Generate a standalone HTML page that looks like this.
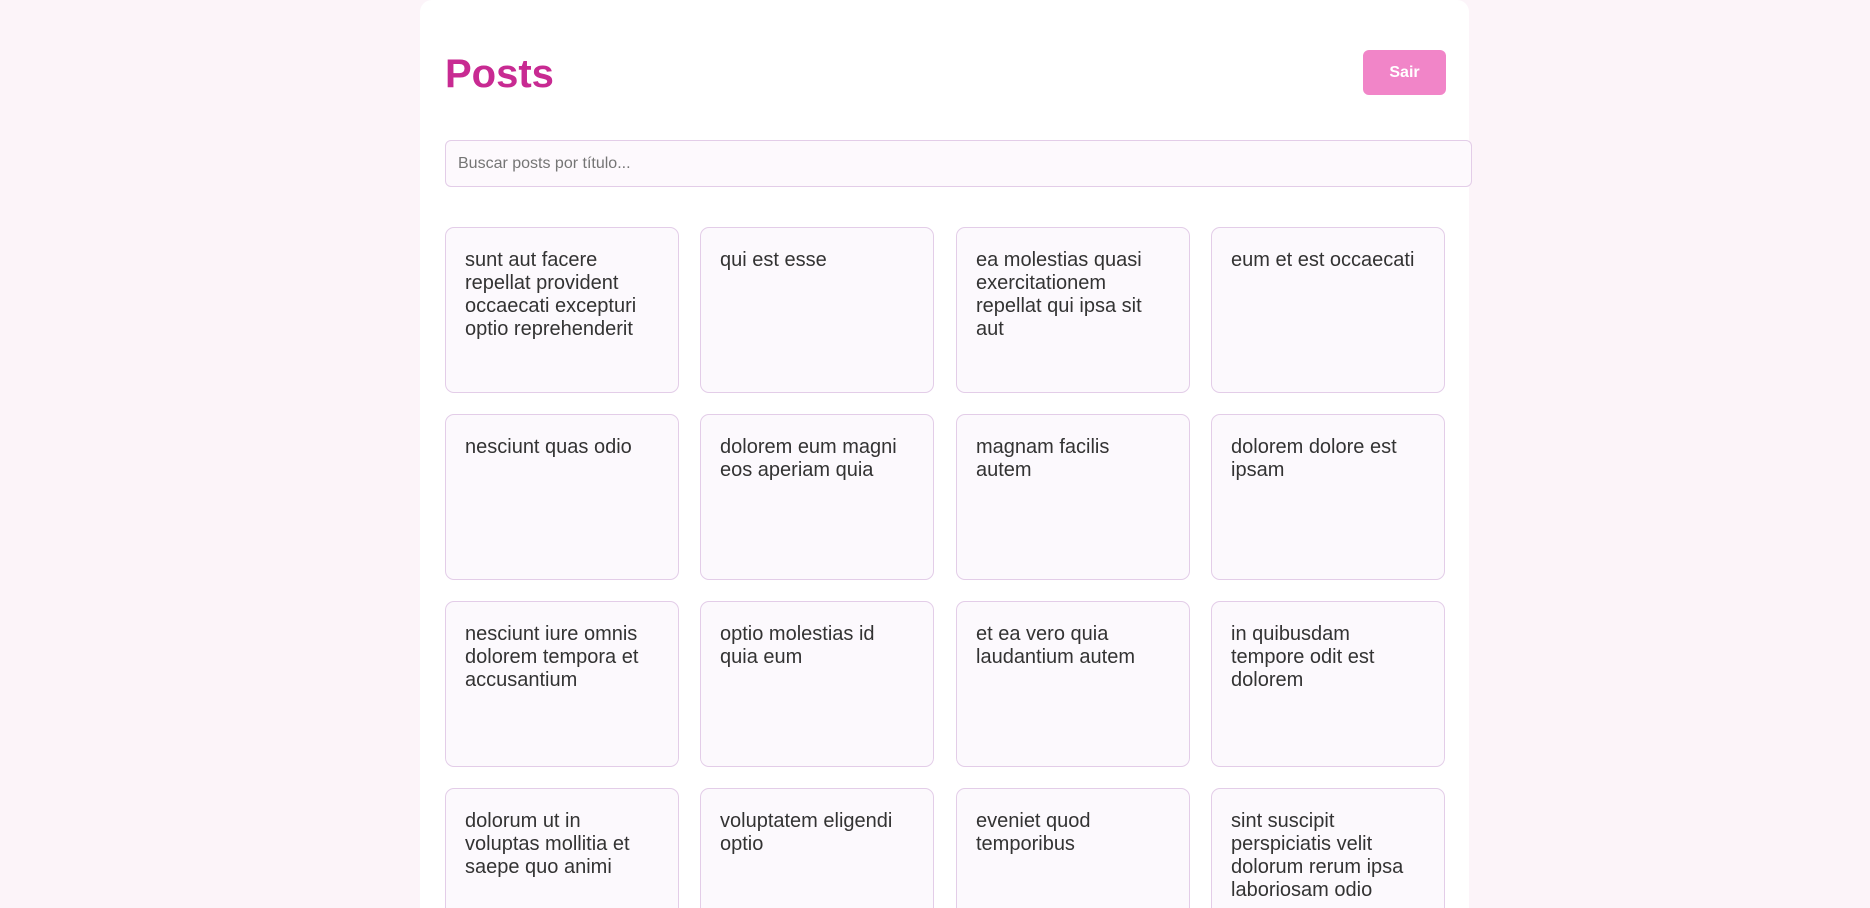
<!DOCTYPE html>
<html><head><meta charset="utf-8"><style>
html,body{margin:0;padding:0;background:#fcf4f9;font-family:"Liberation Sans",Arial,sans-serif;overflow:hidden;height:908px;width:1870px;}
.wrap{position:absolute;left:420px;top:0;width:1049px;height:908px;background:#fff;border-radius:12px 12px 0 0;}
.clip{position:absolute;left:0;top:0;width:1049px;height:908px;overflow:hidden;}
h1{position:absolute;left:25px;top:51px;margin:0;font-size:40px;line-height:46px;font-weight:bold;color:#c82a92;}
.btn{position:absolute;left:943px;top:50px;width:83px;height:45px;background:#f185c8;border-radius:6px;color:#fff;font-weight:bold;font-size:16px;line-height:45px;text-align:center;}
.search{position:absolute;left:25px;top:140px;width:1025px;height:45px;border:1px solid #e3cde8;border-radius:6px;background:#fdf9fd;box-sizing:content-box;}
.search span{position:absolute;left:12px;top:13px;font-size:16px;line-height:19px;color:#757575;}
.card{position:absolute;width:232px;height:164px;border:1px solid #e3cde8;border-radius:9px;background:#fcf9fd;box-sizing:content-box;}
.card div{position:absolute;left:19px;top:21px;width:193px;font-size:20px;line-height:23px;color:#333;}
</style></head><body>
<div class="wrap">
<h1>Posts</h1>
<div class="btn">Sair</div>
<div class="search"><span>Buscar posts por título...</span></div>
<div class="clip">
<div class="card" style="left:25px;top:227px"><div>sunt aut facere repellat provident occaecati excepturi optio reprehenderit</div></div>
<div class="card" style="left:280px;top:227px"><div>qui est esse</div></div>
<div class="card" style="left:536px;top:227px"><div>ea molestias quasi exercitationem repellat qui ipsa sit aut</div></div>
<div class="card" style="left:791px;top:227px"><div>eum et est occaecati</div></div>
<div class="card" style="left:25px;top:414px"><div>nesciunt quas odio</div></div>
<div class="card" style="left:280px;top:414px"><div>dolorem eum magni eos aperiam quia</div></div>
<div class="card" style="left:536px;top:414px"><div>magnam facilis autem</div></div>
<div class="card" style="left:791px;top:414px"><div>dolorem dolore est ipsam</div></div>
<div class="card" style="left:25px;top:601px"><div>nesciunt iure omnis dolorem tempora et accusantium</div></div>
<div class="card" style="left:280px;top:601px"><div>optio molestias id quia eum</div></div>
<div class="card" style="left:536px;top:601px"><div>et ea vero quia laudantium autem</div></div>
<div class="card" style="left:791px;top:601px"><div>in quibusdam tempore odit est dolorem</div></div>
<div class="card" style="left:25px;top:788px"><div>dolorum ut in voluptas mollitia et saepe quo animi</div></div>
<div class="card" style="left:280px;top:788px"><div>voluptatem eligendi optio</div></div>
<div class="card" style="left:536px;top:788px"><div>eveniet quod temporibus</div></div>
<div class="card" style="left:791px;top:788px"><div>sint suscipit perspiciatis velit dolorum rerum ipsa laboriosam odio</div></div>
</div>
</div>
</body></html>
